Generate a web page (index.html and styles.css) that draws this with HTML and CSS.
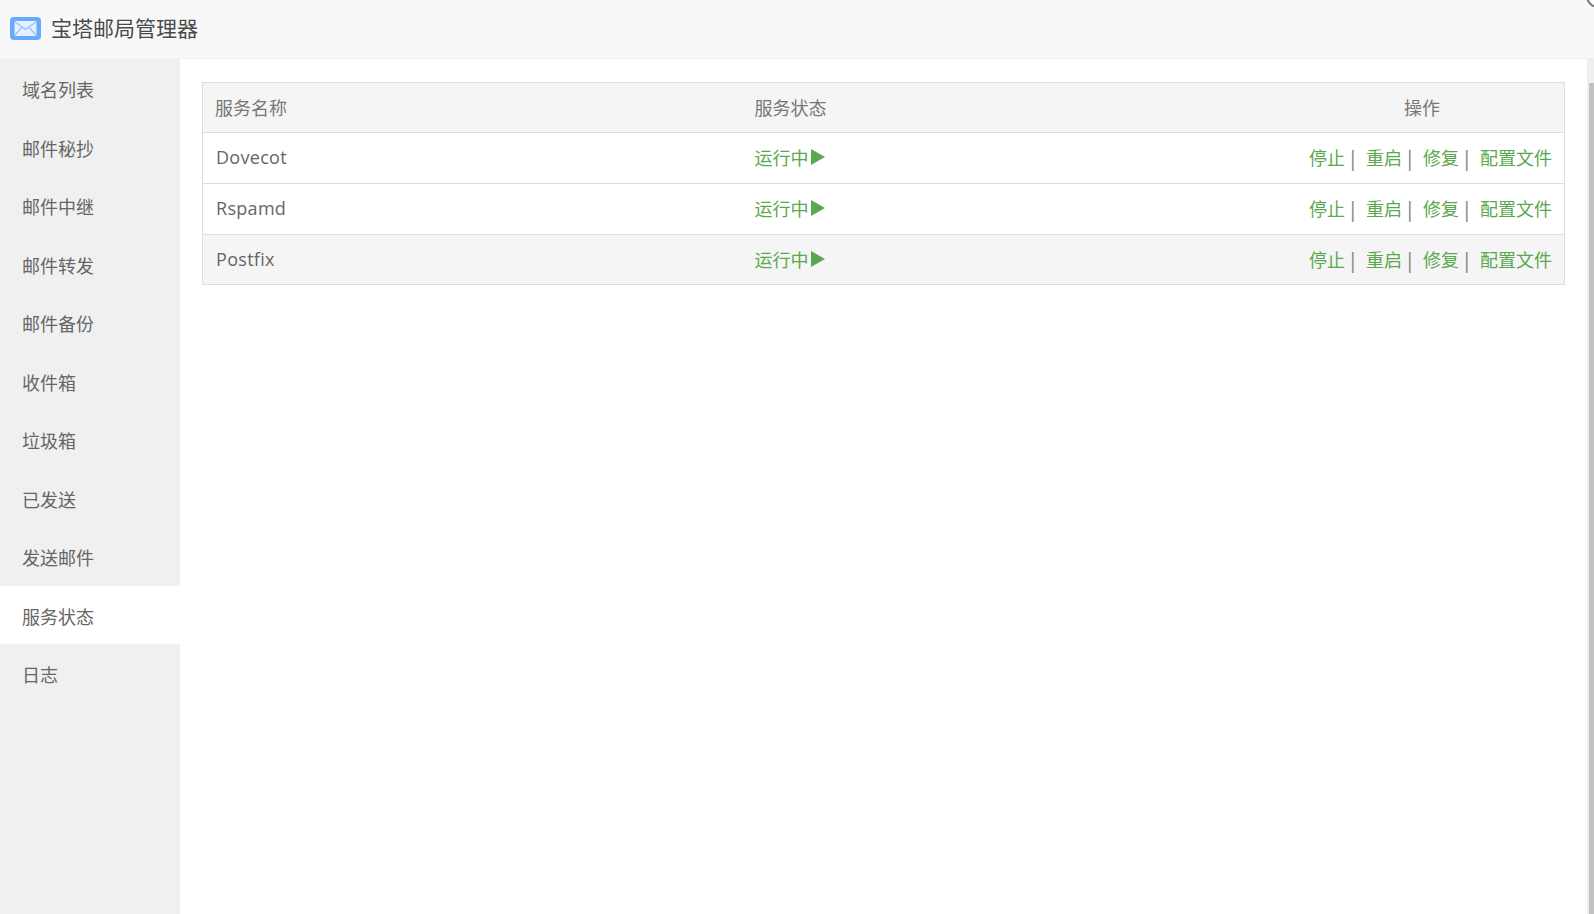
FILE: index.html
```html
<!DOCTYPE html>
<html lang="zh">
<head>
<meta charset="utf-8">
<title>宝塔邮局管理器</title>
<link rel="stylesheet" href="styles.css">
</head>
<body>
<header class="topbar">
  <svg class="logo" viewBox="0 0 31 23" width="31" height="23">
    <rect width="31" height="23" rx="4" fill="#66aaff"/>
    <rect x="4.5" y="4" width="22" height="15" rx="1" fill="#e6f1ff"/>
    <path d="M4.5 4.5 15.5 12.5 26.5 4.5M4.5 18.5 12 10.5M26.5 18.5 19 10.5" fill="none" stroke="#8cc0ff" stroke-width="1.1"/>
  </svg>
  <span class="title">宝塔邮局管理器</span>
  <span class="corner"></span>
</header>
<div class="main">
  <nav class="sidebar">
    <div class="item">域名列表</div>
    <div class="item">邮件秘抄</div>
    <div class="item">邮件中继</div>
    <div class="item">邮件转发</div>
    <div class="item">邮件备份</div>
    <div class="item">收件箱</div>
    <div class="item">垃圾箱</div>
    <div class="item">已发送</div>
    <div class="item">发送邮件</div>
    <div class="item active">服务状态</div>
    <div class="item">日志</div>
  </nav>
  <section class="content">
    <table class="services">
      <thead>
        <tr><th class="c-name">服务名称</th><th class="c-status">服务状态</th><th class="c-ops">操作</th></tr>
      </thead>
      <tbody>
        <tr>
          <td class="name">Dovecot</td>
          <td class="running">运行中<span class="tri"></span></td>
          <td class="ops"><a>停止</a><i>|</i><a>重启</a><i>|</i><a>修复</a><i>|</i><a>配置文件</a></td>
        </tr>
        <tr>
          <td class="name">Rspamd</td>
          <td class="running">运行中<span class="tri"></span></td>
          <td class="ops"><a>停止</a><i>|</i><a>重启</a><i>|</i><a>修复</a><i>|</i><a>配置文件</a></td>
        </tr>
        <tr class="hover">
          <td class="name">Postfix</td>
          <td class="running">运行中<span class="tri"></span></td>
          <td class="ops"><a>停止</a><i>|</i><a>重启</a><i>|</i><a>修复</a><i>|</i><a>配置文件</a></td>
        </tr>
      </tbody>
    </table>
  </section>
  <div class="scrollbar"><div class="thumb"></div></div>
</div>
</body>
</html>
```
FILE: styles.css
```css
* { box-sizing: border-box; }
html, body { margin: 0; height: 100%; overflow: hidden; }
body {
  display: flex;
  flex-direction: column;
  font-family: "Open Sans", "Noto Sans CJK SC", sans-serif;
  color: #666;
  background: #fff;
}
.topbar {
  position: relative;
  overflow: hidden;
  height: 59px;
  flex: none;
  display: flex;
  align-items: center;
  gap: 10px;
  padding: 0 0 4px 10px;
  background: #f8f8f8;
  border-bottom: 1px solid #f0f0f0;
}
.logo { display: block; position: relative; top: 1px; }
.title { font-size: 21px; color: #4a4a4a; }
.corner {
  position: absolute;
  top: -16px;
  right: -16px;
  width: 24px;
  height: 24px;
  border-radius: 50%;
  background: #fff;
  border: 2px solid #777;
}
.main { flex: 1; display: flex; min-height: 0; }
.sidebar { width: 180px; flex: none; background: #f0f0f0; }
.item {
  height: 58.5px;
  padding-left: 22px;
  line-height: 62px;
  font-size: 18px;
  color: #666;
}
.item.active { background: #fff; }
.content { flex: 1; padding: 23px 22px 0 22px; }
.services {
  width: 100%;
  border-collapse: collapse;
  border: 1px solid #ddd;
  font-size: 18px;
  color: #666;
}
.services th, .services td {
  height: 51px;
  padding: 0 12px 2px;
  border-top: 1px solid #ddd;
  font-weight: normal;
  text-align: left;
}
.services th { height: 50px; background: #f5f5f5; color: #777; }
.services tr.hover td { height: 50px; background: #f5f5f5; }
.services .name { letter-spacing: 0.3px; padding-left: 13px; }
.c-name { width: 540px; }
.c-status { width: 200px; }
.services .c-ops { text-align: right; padding-right: 124px; }
.services .running { color: #5aa84e; }
.tri {
  display: inline-block;
  margin-left: 2px;
  border-style: solid;
  border-width: 8px 0 8px 14px;
  border-color: transparent transparent transparent #5aa84e;
  vertical-align: 0;
}
.services .ops { text-align: right; white-space: nowrap; }
.ops a { color: #5aa84e; }
.ops i {
  display: inline-block;
  width: 10px;
  margin: 0 9px 0 2px;
  font-style: normal;
  font-size: 21px;
  line-height: 18px;
  text-align: center;
  color: #888;
  vertical-align: -1px;
}
.scrollbar { width: 7px; flex: none; background: #efefef; margin-top: -1px; }
.thumb { margin: 25px 0 0 2px; height: calc(100% - 25px); background: #c1c1c1; }
```
